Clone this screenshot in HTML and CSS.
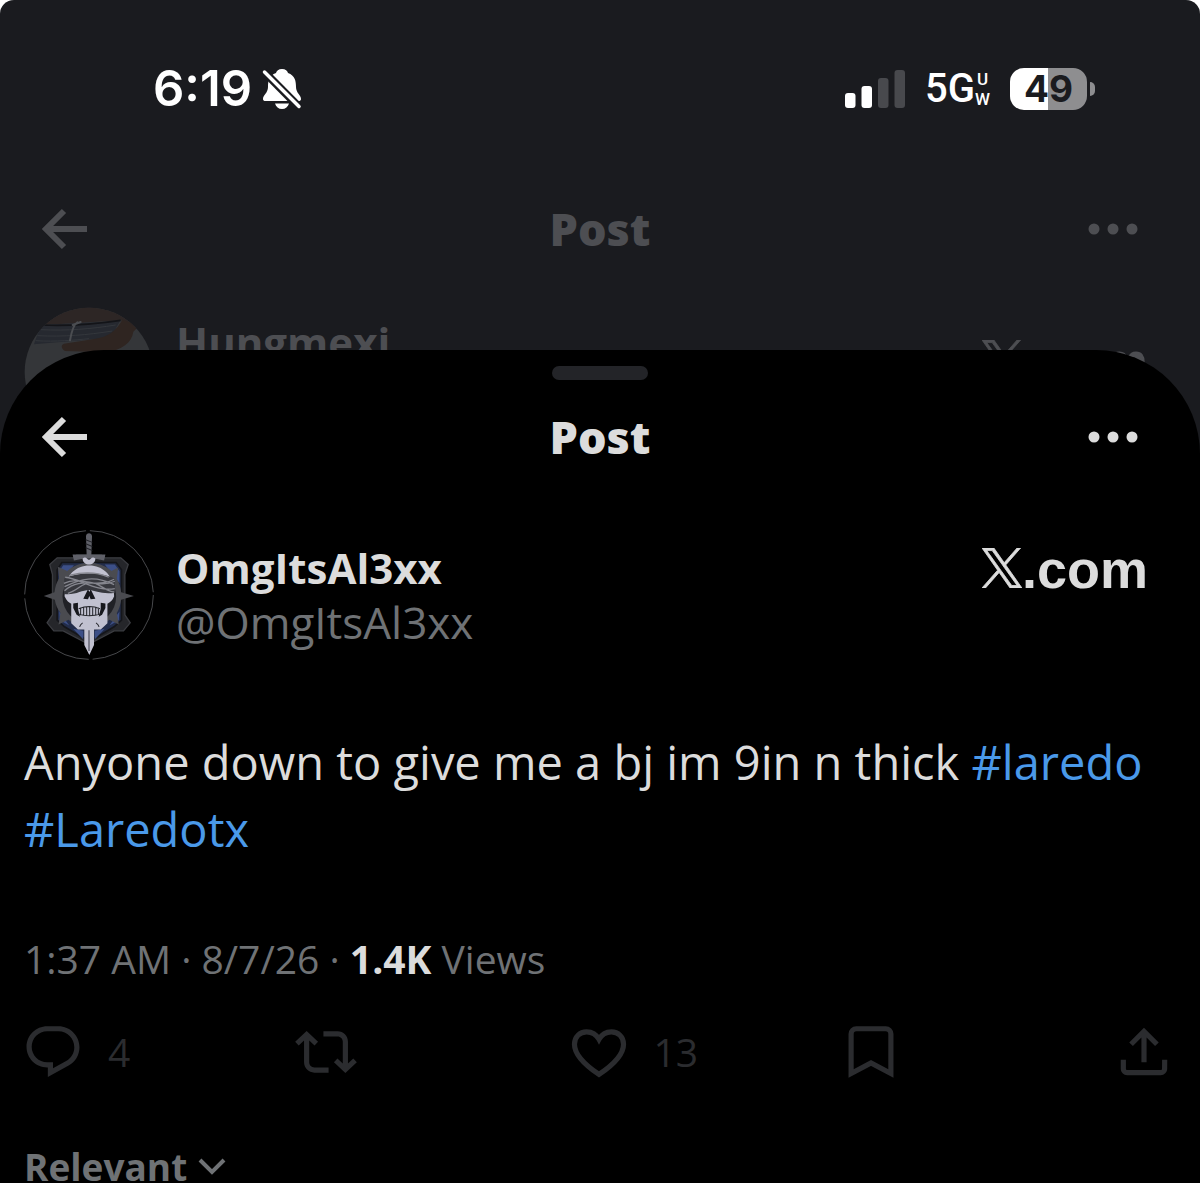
FILE: index.html
```html
<!DOCTYPE html>
<html lang="en">
<head>
<meta charset="utf-8">
<meta name="viewport" content="width=device-width, initial-scale=1">
<title>Post</title>
<link rel="stylesheet" href="styles.css">
</head>
<body>
<svg class="defs" aria-hidden="true">
  <symbol id="back" viewBox="0 0 46 42"><path d="M22 3 4 21l18 18M5 21h40" fill="none" stroke="currentColor" stroke-width="6"/></symbol>
  <symbol id="more" viewBox="0 0 50 12"><circle cx="6" cy="6" r="5.5"/><circle cx="25" cy="6" r="5.5"/><circle cx="44" cy="6" r="5.5"/></symbol>
  <symbol id="x" viewBox="0 0 24 24"><path stroke="currentColor" stroke-width=".5" d="M14.258 10.152L23.176 0h-2.113l-7.747 8.813L7.133 0H0l9.352 13.328L0 23.973h2.113l8.176-9.309 6.531 9.309h7.133zm-2.895 3.293l-.949-1.328L2.875 1.56h3.246l6.086 8.523.945 1.328 7.91 11.078h-3.246z"/></symbol>
</svg>
<div class="phone">
  <div class="behind">
    <div class="status">
      <div class="status-left">
        <span class="clock">6:19</span>
        <svg class="bell" viewBox="0 0 40 42" aria-label="Silent">
          <path d="M20 1c-3.500 0-5.500 2-6 4C7 7.500 6 13 6 19c0 6-5 8-5 12 0 1.500 1 2 2.500 2h33c1.500 0 2.500-.5 2.500-2 0-4-5-6-5-12 0-6-1-11.500-8-14-.5-2-2.500-4-6-4zM13 35.500h14c-1 3.500-3.500 5.500-7 5.500s-6-2-7-5.500z" fill="currentColor"/>
          <path d="M2 3.500 38 40" stroke="#1a1b1f" stroke-width="8"/>
          <path d="M2.500 4 37 38.500" stroke="currentColor" stroke-width="3.500" stroke-linecap="round"/>
        </svg>
      </div>
      <div class="status-right">
        <svg class="signal" viewBox="0 0 60 38" aria-label="Signal">
          <g fill="currentColor"><rect y="23" width="10.500" height="15" rx="3"/><rect x="16.500" y="16" width="10.500" height="22" rx="3"/></g>
          <g fill="#48494d"><rect x="33" y="8" width="10.500" height="30" rx="3"/><rect x="49.500" width="10.500" height="38" rx="3"/></g>
        </svg>
        <span class="network">5G<span class="uw"><span>U</span><span>W</span></span></span>
        <span class="battery"><span class="level">49</span><span class="nub"></span></span>
      </div>
    </div>
    <header class="bar">
      <button class="icon-btn" aria-label="Back"><svg class="arrow"><use href="#back"/></svg></button>
      <h2 class="title">Post</h2>
      <button class="icon-btn" aria-label="More"><svg class="dots"><use href="#more"/></svg></button>
    </header>
    <div class="author">
      <svg class="avatar" viewBox="0 0 390 390" aria-hidden="true">
        <defs><clipPath id="round"><circle cx="195" cy="195" r="193"/></clipPath></defs>
        <g clip-path="url(#round)">
          <path fill="#343639" d="M0 0h390v390H0z"/>
          <path fill="#2d2625" d="M40 0h350v80L290 40 60 54z"/>
          <path fill="#262930" d="M50 54 288 42 260 92 30 112z"/>
          <path d="M50 54c80 4 160-2 240-14" fill="none" stroke="#131418" stroke-width="5"/>
          <path d="M50 68c80 4 150-2 225-14M40 86c80 4 150-2 225-14M35 101c60 4 120-2 160-6" fill="none" stroke="#34373c" stroke-width="3"/>
          <path fill="#2f2521" d="M295 38c-16 30-40 52-85 58l-90 14c-12 4-6 18 4 22l120 4c50-6 80-30 84-62l18-18z"/>
          <path d="M138 100c5-28 10-48 22-54M146 54l24-9" fill="none" stroke="#4b4d51" stroke-width="6" stroke-linecap="round"/>
        </g>
      </svg>
      <div class="names"><strong class="name">Hungmexi</strong></div>
      <div class="brand"><svg class="xlogo"><use href="#x"/></svg><span>.com</span></div>
    </div>
  </div>

  <main class="sheet">
    <div class="grabber"></div>
    <header class="bar">
      <button class="icon-btn" aria-label="Back"><svg class="arrow"><use href="#back"/></svg></button>
      <h1 class="title">Post</h1>
      <button class="icon-btn" aria-label="More"><svg class="dots"><use href="#more"/></svg></button>
    </header>
    <article>
      <div class="author">
        <svg class="avatar" viewBox="43 47 388 388" aria-hidden="true">
          <circle cx="237" cy="241" r="192" fill="#000" stroke="#55565a" stroke-width="2.500" stroke-dasharray="290 12"/>
          <path fill="#25262a" stroke="#3b3c41" stroke-width="4" d="M120 150l22-20h48l10-8h74l10 8h48l22 20-10 30v120l16 24-20 24h-28l-76 40-76-40h-28l-20-24 16-24V180z"/>
          <path fill="#222c49" stroke="#15161a" stroke-width="5" d="M142 166l14-22h162l16 22v150l-22 20-74 44-74-44-22-20z"/>
          <path fill="#3c4f87" d="M148 170l12-18h32l-44 54zM284 150h30l14 20v36zM148 290l30 42-28-16zM328 290l-30 42 28-16zM190 342l30 6v26zM284 342l-30 6v26z"/>
          <path fill="#4a4b50" d="M102 244l32-11c2-16 6-30 14-42l-4-34 28 12c38-32 94-32 132 0l20-10-4 34c8 12 12 26 13 40l38 11-38 11c-2 14-6 28-13 40l6 34-28-14c-38 32-84 32-122 0l-30 14 6-34c-9-12-15-26-17-40z"/>
          <circle cx="238" cy="246" r="80" fill="#202126"/>
          <path fill="#5f6068" d="M228 66c0-12 18-12 18 0l-2 56h-14zM188 120h98l-4 18c-28-8-60-8-90 0z"/>
          <path d="M227 76l20 8m-20 4 20 8m-20 4 20 8" stroke="#222328" stroke-width="3"/>
          <path fill="#c1c1d0" d="M218 132c10-8 14 4 19 4s8-12 19-4c0 12-10 18-19 18s-19-6-19-18zM223 340h29v50l-14 30-15-30z"/>
          <path d="M237 346v62" stroke="#5b5c6a" stroke-width="4"/>
          <path fill="#c1c1d0" d="M238 153c-40 0-68 28-72 66l-2 26c6 14 14 20 20 22v58l20 19h68l20-19v-58c8-4 16-10 20-22l-2-26c-4-38-32-66-72-66z"/>
          <path fill="#17181d" d="M220 252l14-28 4 8 4-8 14 28-14 2-4-10-4 10zM190 266l14-2v18l6 24-10-6-10-20zM286 266l-14-2v18l-6 24 10-6 10-20z"/>
          <path fill="#37383e" d="M163 192c40-20 110-20 150 0l3 42c-40 6-60-6-78-8-24 0-40 16-76 12z"/>
          <path d="M162 206c50-24 100 18 152-6M164 228c50-44 100-6 148-34M166 188c46 4 90 44 148 34M164 216c50-24 90-34 148-6M180 182c40-10 80-10 116 6M174 236c30-8 40-30 66-32s44 26 72 28" fill="none" stroke="#85868e" stroke-width="4"/>
          <path d="M206 282c20-8 44-8 64 0M204 298c20 6 48 6 68 0M212 278v24m9-26v26m9-27v28m9-28v28m9-28v28m9-27v26m8-24v23M218 324c-6 4-8 8-9 12M258 324c6 4 8 8 9 12" fill="none" stroke="#24252b" stroke-width="3"/>
        </svg>
        <div class="names"><strong class="name">OmgItsAl3xx</strong><span class="handle">@OmgItsAl3xx</span></div>
        <div class="brand"><svg class="xlogo"><use href="#x"/></svg><span>.com</span></div>
      </div>
      <p class="text">Anyone down to give me a bj im 9in n thick <a href="#laredo">#laredo</a> <a href="#laredotx">#Laredotx</a></p>
      <p class="meta">1:37 AM · 8/7/26 · <strong>1.4K</strong> Views</p>
      <div class="actions">
        <button class="action" aria-label="Reply"><svg viewBox="0 0 24 24"><path d="M1.751 10c0-4.420 3.584-8 8.005-8h4.366c4.490 0 8.129 3.640 8.129 8.130 0 2.960-1.607 5.680-4.196 7.110l-8.054 4.460v-3.690h-.067c-4.490.1-8.183-3.510-8.183-8.010zm8.005-6c-3.317 0-6.005 2.690-6.005 6 0 3.370 2.770 6.080 6.138 6.010l.351-.01h1.761v2.300l5.087-2.810c1.951-1.080 3.163-3.130 3.163-5.360 0-3.390-2.744-6.130-6.129-6.130H9.756z"/></svg><span>4</span></button>
        <button class="action" aria-label="Repost"><svg viewBox="0 0 24 24"><path d="M4.500 3.880l4.432 4.140-1.364 1.460L5.500 7.550V16c0 1.100.896 2 2 2H13v2H7.500c-2.209 0-4-1.790-4-4V7.550L1.432 9.480.068 8.020 4.500 3.880zM16.500 6H11V4h5.500c2.209 0 4 1.790 4 4v8.450l2.068-1.930 1.364 1.460-4.432 4.140-4.432-4.140 1.364-1.460 2.068 1.930V8c0-1.100-.896-2-2-2z"/></svg></button>
        <button class="action" aria-label="Like"><svg viewBox="0 0 24 24"><path class="line" d="M12 20.700C6.500 17 2.500 13 2.500 9c0-2.900 2.100-4.800 4.700-4.800 2 0 3.800 1.100 4.800 2.900 1-1.800 2.800-2.900 4.800-2.900 2.600 0 4.700 1.900 4.700 4.800 0 4-4 8-9.500 11.700z"/></svg><span>13</span></button>
        <button class="action" aria-label="Bookmark"><svg viewBox="0 0 24 24"><path class="line" d="M4.300 20.300V5a2 2 0 0 1 2-2h11.400a2 2 0 0 1 2 2v15.300L12 16.200z"/></svg></button>
        <button class="action" aria-label="Share"><svg viewBox="0 0 24 24"><path d="M12 2.590l5.700 5.700-1.410 1.420L13 6.410V16h-2V6.410l-3.300 3.300-1.410-1.420L12 2.590zM21 15l-.02 3.510c0 1.380-1.120 2.490-2.500 2.490H5.500C4.110 21 3 19.880 3 18.500V15h2v3.500c0 .28.220.5.500.5h12.980c.28 0 .5-.22.500-.5L19 15h2z"/></svg></button>
      </div>
    </article>
    <button class="sort">Relevant <svg viewBox="0 0 28 20" aria-hidden="true"><path d="M2 3l12 12L26 3" fill="none" stroke="currentColor" stroke-width="4"/></svg></button>
  </main>
</div>
</body>
</html>
```
FILE: styles.css
```css
* { box-sizing: border-box; }
body {
  margin: 0;
  background: #fff;
  font-family: "Open Sans", "Noto Sans", sans-serif;
  color: #dcdcdc;
}
.defs { display: none; }
button {
  border: 0;
  padding: 0;
  background: none;
  color: inherit;
  font: inherit;
  cursor: pointer;
}
svg { display: block; fill: currentColor; }
.phone {
  display: grid;
  height: 100vh;
  overflow: hidden;
  border-radius: 14px 14px 0 0;
  background: #1a1b1f;
}
.behind, .sheet { grid-area: 1 / 1; min-width: 0; }
.behind { color: #4d4e52; }

.status {
  display: flex;
  justify-content: space-between;
  align-items: center;
  height: 179px;
  padding: 0 105px 2px 153px;
  color: #fff;
}
.status-left, .status-right { display: flex; align-items: center; }
.status-left { gap: 10px; }
.status-right { gap: 20px; }
.clock { font: 600 49px/60px Inter, sans-serif; }
.bell { width: 40px; height: 42px; }
.signal { width: 60px; height: 38px; }
.network {
  display: flex;
  align-items: center;
  font: 500 40px/40px Roboto, sans-serif;
}
.uw {
  display: flex;
  flex-direction: column;
  align-items: center;
  font-size: 17px;
  line-height: 20px;
}
.battery { display: flex; align-items: center; gap: 3px; }
.level {
  width: 77px;
  border-radius: 14px;
  background: linear-gradient(to right, #fff 50%, #8e8e90 50%);
  color: #1a1b1f;
  text-align: center;
  font: 700 37px/42px Inter, sans-serif;
}
.nub {
  width: 5px;
  height: 14px;
  border-radius: 0 7px 7px 0;
  background: #8e8e90;
}

.bar {
  display: grid;
  grid-template-columns: 1fr auto 1fr;
  align-items: center;
  height: 100px;
  padding: 0 62px 0 42px;
}
.icon-btn:last-child { justify-self: end; }
.icon-btn:first-child { justify-self: start; }
.title { margin: 0 -20px 0 0; font-size: 45px; font-weight: 800; line-height: 60px; }
.arrow { width: 46px; height: 42px; }
.dots { width: 50px; height: 12px; }

.author { display: flex; align-items: flex-start; padding: 28px 52px 0 24px; }
.avatar { width: 130px; height: 130px; flex: none; }
.names {
  display: flex;
  flex-direction: column;
  flex: 1;
  padding: 11px 0 0 22px;
  font-size: 42px;
  line-height: 54px;
}
.name { font-weight: 700; }
.behind .names { padding-top: 8px; }
.handle { color: #6f7275; font-size: 44px; }
.brand {
  display: flex;
  align-items: flex-end;
  padding-top: 18px;
  font: 700 54px/38px "Liberation Sans", sans-serif;
}
.xlogo { width: 40px; height: 40px; }
.behind .brand { padding-top: 33px; }

.sheet {
  margin-top: 350px;
  border-radius: 104px 104px 0 0;
  background: #000;
}
.grabber {
  width: 96px;
  height: 14px;
  margin: 16px auto 7px;
  border-radius: 7px;
  background: #232428;
}
.sheet .author { padding-top: 43px; }
.text {
  margin: 69px 24px 0;
  font-size: 47px;
  line-height: 67px;
}
.text a { color: #4a99e9; text-decoration: none; }
.meta {
  margin: 66px 24px 0;
  color: #6f7275;
  font-size: 39px;
  line-height: 60px;
}
.meta strong { color: #dcdcdc; }
.actions {
  display: grid;
  grid-template-columns: repeat(4, 1fr) 62px;
  margin-top: 32px;
  padding: 0 25px 0 22px;
  color: #2b2c2f;
}
.action {
  display: flex;
  align-items: center;
  gap: 24px;
  font-size: 39px;
  line-height: 62px;
}
.action svg { width: 62px; height: 62px; }
.line { fill: none; stroke: currentColor; stroke-width: 2; }
.sort {
  display: flex;
  align-items: center;
  gap: 11px;
  margin: 54px 24px 0;
  color: #6f7275;
  font-size: 37px;
  font-weight: 700;
  line-height: 60px;
}
.sort svg { width: 28px; height: 20px; }
```
